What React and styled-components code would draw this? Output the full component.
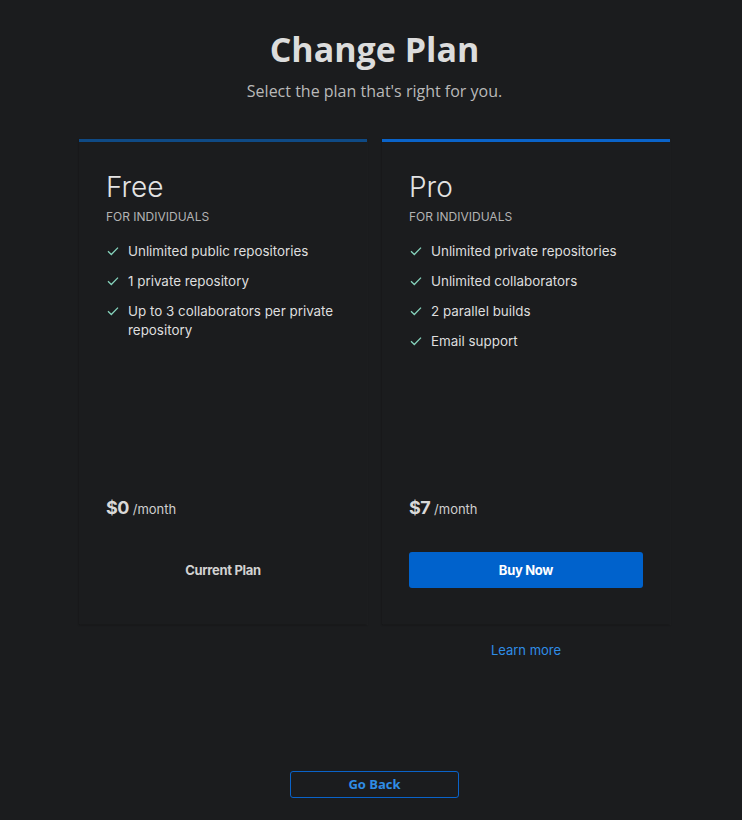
import React from "react";
import styled, { createGlobalStyle } from "styled-components";

const Global = createGlobalStyle`
  html, body { margin: 0; padding: 0; background: #1b1c1e; }
  body { font-family: Inter, "Noto Sans", sans-serif; -webkit-font-smoothing: antialiased; }
  * { box-sizing: border-box; }
`;

const Page = styled.div`
  min-height: 820px;
  padding: 26px 0 22px 7px;
  display: flex;
  flex-direction: column;
  align-items: center;
`;

const Title = styled.h1`
  margin: 0;
  font-family: "Open Sans", sans-serif;
  font-weight: 700;
  font-size: 34px;
  line-height: 46px;
  color: #dcdcdc;
`;

const Subtitle = styled.p`
  margin: 8px 0 0;
  font-family: "Open Sans", sans-serif;
  font-size: 16px;
  line-height: 22px;
  color: #b9b9b9;
`;

const Grid = styled.div`
  margin-top: 37px;
  display: grid;
  grid-template-columns: 288px 288px;
  column-gap: 15px;
  row-gap: 18px;
`;

const Card = styled.div`
  height: 485px;
  border-top: 3px solid ${(p) => (p.$active ? "#0a63c9" : "#0f4a85")};
  background: #1b1c1e;
  box-shadow: 0 1px 2px rgba(0, 0, 0, 0.35), 1px 1px 0 rgba(255, 255, 255, 0.025);
  padding: 29px 27px 36px 27px;
  display: flex;
  flex-direction: column;
`;

const PlanName = styled.h2`
  margin: 0;
  font-weight: 300;
  font-size: 28px;
  line-height: 32px;
  color: #e4e4e4;
`;

const Audience = styled.div`
  margin-top: 6px;
  font-size: 12px;
  line-height: 16px;
  text-transform: uppercase;
  color: #b3b3b3;
`;

const Features = styled.ul`
  list-style: none;
  margin: 17px 0 0;
  padding: 0 0 0 1px;
  display: flex;
  flex-direction: column;
  gap: 11px;
`;

const Feature = styled.li`
  display: flex;
  align-items: flex-start;
  gap: 9px;
  font-size: 13.4px;
  line-height: 19px;
  color: #dedede;
`;

const Check = styled.svg`
  flex: none;
  width: 12px;
  height: 12px;
  margin-top: 3px;
`;

const Bottom = styled.div`
  margin-top: auto;
  display: flex;
  flex-direction: column;
`;

const Price = styled.div`
  display: flex;
  align-items: baseline;
  gap: 4px;
  color: #cfcfcf;
`;

const Amount = styled.span`
  font-size: 18px;
  font-weight: 700;
  letter-spacing: -0.6px;
  color: #d8d8d8;
`;

const Per = styled.span`
  font-size: 13px;
`;

const Action = styled.div`
  margin-top: 34px;
  height: 36px;
  border-radius: 3px;
  display: flex;
  align-items: center;
  justify-content: center;
  font-size: 13px;
  font-weight: 700;
  letter-spacing: -0.3px;
  padding-bottom: 1px;
  background: ${(p) => (p.$primary ? "#0062cc" : "transparent")};
  color: ${(p) => (p.$primary ? "#ffffff" : "#d2d2d2")};
`;

const LearnMore = styled.a`
  grid-column: 2;
  justify-self: center;
  font-size: 13px;
  color: #2f8de6;
  text-decoration: none;
`;

const BackButton = styled.button`
  margin-top: auto;
  width: 169px;
  height: 27px;
  border: 1px solid #0a63c9;
  border-radius: 3px;
  background: transparent;
  font-family: "Open Sans", sans-serif;
  font-weight: 700;
  font-size: 13px;
  line-height: 16px;
  padding: 0 0 1px;
  color: #2f8de6;
`;

const CheckIcon = () => (
  <Check viewBox="0 0 12 12">
    <path d="M1 6.3 L4.3 9.5 L11 2.6" fill="none" stroke="#86d3bd" strokeWidth="1.3" />
  </Check>
);

const plans = [
  {
    name: "Free",
    features: ["Unlimited public repositories", "1 private repository", "Up to 3 collaborators per private repository"],
    price: "$0",
    action: "Current Plan",
  },
  {
    name: "Pro",
    active: true,
    features: ["Unlimited private repositories", "Unlimited collaborators", "2 parallel builds", "Email support"],
    price: "$7",
    action: "Buy Now",
  },
];

export default function App() {
  return (
    <>
      <Global />
      <Page>
        <Title>Change Plan</Title>
        <Subtitle>Select the plan that's right for you.</Subtitle>
        <Grid>
          {plans.map((p) => (
            <Card key={p.name} $active={p.active}>
              <PlanName>{p.name}</PlanName>
              <Audience>For individuals</Audience>
              <Features>
                {p.features.map((f) => (
                  <Feature key={f}>
                    <CheckIcon />
                    <span>{f}</span>
                  </Feature>
                ))}
              </Features>
              <Bottom>
                <Price>
                  <Amount>{p.price}</Amount>
                  <Per>/month</Per>
                </Price>
                <Action $primary={p.active}>{p.action}</Action>
              </Bottom>
            </Card>
          ))}
          <LearnMore href="#">Learn more</LearnMore>
        </Grid>
        <BackButton>Go Back</BackButton>
      </Page>
    </>
  );
}
